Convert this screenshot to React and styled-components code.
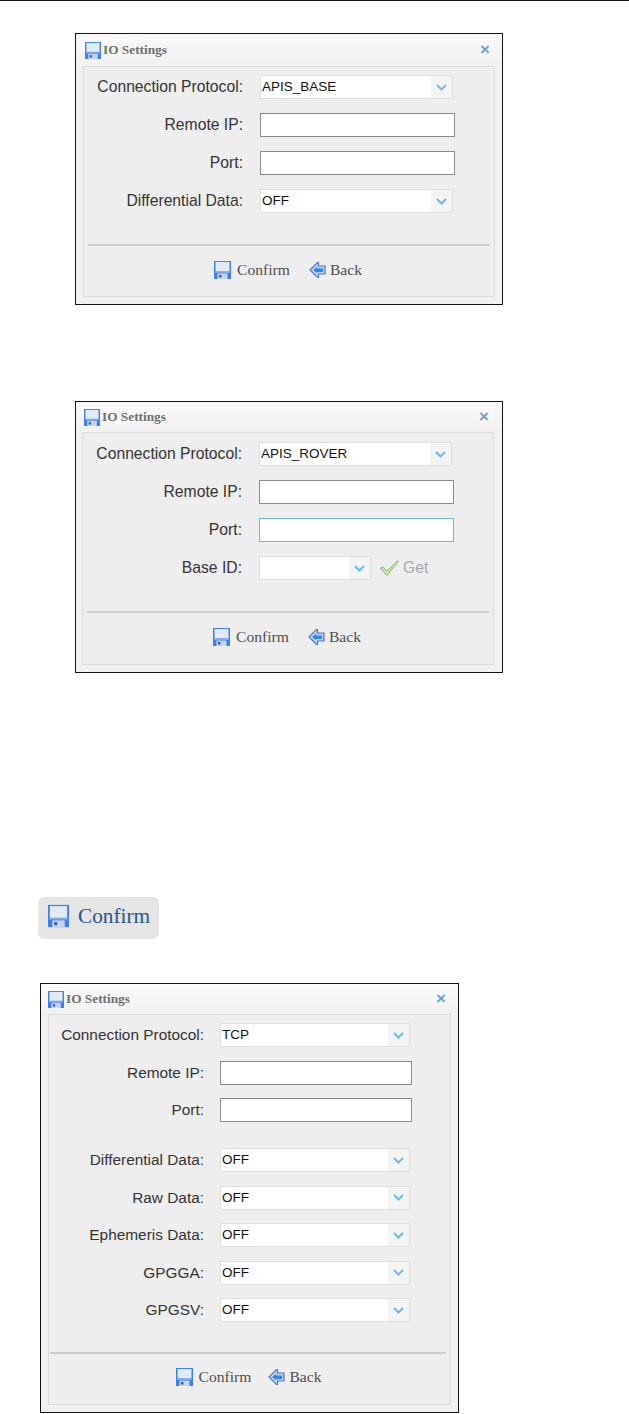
import React from "react";
import styled, { createGlobalStyle } from "styled-components";

const GlobalStyle = createGlobalStyle`
  html, body {
    margin: 0;
    padding: 0;
    background: #fff;
  }
`;

const Page = styled.div`
  width: 629px;
  height: 1414px;
  overflow: hidden;
  border-top: 1px solid #111;
  box-sizing: border-box;
`;

const Dialog = styled.section`
  box-sizing: border-box;
  display: flex;
  flex-direction: column;
  width: ${(p) => p.$width}px;
  height: ${(p) => p.$height}px;
  margin: ${(p) => p.$top}px 0 0 ${(p) => p.$left}px;
  padding: 0 ${(p) => p.$insetRight}px 7px ${(p) => p.$inset}px;
  border: 1px solid #111;
  background: linear-gradient(#fafafa, #f1f1f1 30px);
`;

const Header = styled.header`
  display: flex;
  align-items: center;
  height: ${(p) => p.$height}px;
  padding-left: ${(p) => p.$pad}px;
  flex: none;
`;

const Title = styled.h2`
  flex: 1;
  margin: 0 0 0 2px;
  font: bold 13.3px "Liberation Serif", serif;
  color: #6f6f6f;
`;

const Close = styled.span`
  margin-right: 5px;
  font: bold 17px "Liberation Sans", sans-serif;
  color: #6c9fd2;
`;

const Panel = styled.div`
  box-sizing: border-box;
  flex: 1;
  display: flex;
  flex-direction: column;
  padding-top: 8px;
  border: 1px solid #dcdcdc;
  background: #eeeeee;
`;

const Fields = styled.div`
  display: flex;
  flex-direction: column;
  gap: ${(p) => p.$gap}px;
`;

const Row = styled.div`
  display: flex;
  align-items: center;
  gap: ${(p) => p.$gap || 17}px;
  height: 24px;
  margin-top: ${(p) => p.$space || 0}px;
`;

const Label = styled.label`
  width: ${(p) => p.$width}px;
  text-align: right;
  flex: none;
  font: ${(p) => p.$size || 15.7}px "Liberation Sans", sans-serif;
  color: #333;
  white-space: nowrap;
`;

const SelectBox = styled.div`
  box-sizing: border-box;
  display: flex;
  width: ${(p) => p.$width}px;
  height: 24px;
  border: 1px solid #dfdfdf;
  background: #fff;
`;

const SelectValue = styled.span`
  flex: 1;
  padding-left: 1px;
  font: 13.5px/22px "Liberation Sans", sans-serif;
  color: #111;
`;

const ArrowBox = styled.span`
  display: flex;
  align-items: center;
  justify-content: center;
  width: 21px;
  background: #f4f4f4;
`;

const TextInput = styled.div`
  box-sizing: border-box;
  width: ${(p) => p.$width}px;
  height: 24px;
  background: #fff;
  border: 1px solid ${(p) => (p.$focused ? "#6cb4e4" : "#8a8a8a")};
`;

const GetButton = styled.span`
  display: flex;
  align-items: center;
  gap: 4px;
  margin-left: -9px;
  font: 15.7px "Liberation Sans", sans-serif;
  color: #a9a9a9;
`;

const Divider = styled.hr`
  margin: ${(p) => p.$top}px ${(p) => p.$right}px 0 ${(p) => p.$left}px;
  border: 0;
  border-top: 2px solid #cdcdcd;
  height: 0;
`;

const Footer = styled.footer`
  display: flex;
  justify-content: center;
  gap: ${(p) => p.$gap}px;
  margin-top: ${(p) => p.$top}px;
  padding-right: ${(p) => p.$shift}px;
`;

const Action = styled.span`
  display: flex;
  align-items: center;
  gap: ${(p) => p.$gap}px;
  height: 18px;
  font: 15.6px "Liberation Serif", serif;
  color: #4d4d4d;
`;

const Chip = styled.div`
  box-sizing: border-box;
  display: flex;
  align-items: center;
  gap: 9px;
  width: 121px;
  height: 42px;
  margin: 224px 0 0 38px;
  padding: 0 0 4px 10px;
  border-radius: 6px;
  background: #e5e5e5;
  font: 21.3px "Liberation Serif", serif;
  color: #25558f;
`;

function Floppy({ w = 17, h = 18 }) {
  return (
    <svg width={w} height={h} viewBox="0 0 17 18">
      <rect width="17" height="18" fill="#3f7fe8" />
      <rect x="1.5" y="1" width="14" height="9.5" fill="#e2eaf6" />
      <rect x="1" y="10.5" width="15" height="1.5" fill="#7da8ec" />
      <rect x="3.5" y="12.5" width="10" height="5.5" fill="#c9d6ea" />
      <rect x="5" y="14" width="2.5" height="2.5" fill="#2d5cb0" />
    </svg>
  );
}

function BackArrow() {
  return (
    <svg width="17" height="18" viewBox="0 0 17 18">
      <path
        d="M1 9 L8.5 1.5 L9.5 1.5 L9.5 5 L16 5 L16 13 L9.5 13 L9.5 16.5 L8.5 16.5 Z"
        fill="#bcd4f4"
        stroke="#5a6fc8"
        strokeWidth="1.2"
      />
      <path d="M4 9 L8 6 L8 7.5 L14 7.5 L14 11 L8 11 L8 12 Z" fill="#2f86e4" />
    </svg>
  );
}

function Chevron() {
  return (
    <svg width="11" height="7" viewBox="0 0 11 7">
      <path d="M1 1 L5.5 5.5 L10 1" fill="none" stroke="#6cb6ee" strokeWidth="2" />
    </svg>
  );
}

function Check() {
  return (
    <svg width="20" height="16" viewBox="0 0 20 16">
      <path
        d="M1 8 L4 7 L8 11 L18 1 L19.5 1.5 L8 15.5 Z"
        fill="#c2e6a2"
        stroke="#8fb98a"
        strokeWidth="1"
      />
    </svg>
  );
}

function Select({ value, width }) {
  return (
    <SelectBox $width={width}>
      <SelectValue>{value}</SelectValue>
      <ArrowBox>
        <Chevron />
      </ArrowBox>
    </SelectBox>
  );
}

function Actions({ top = 15, gap = 19, shift = 2 }) {
  return (
    <Footer $top={top} $gap={gap} $shift={shift}>
      <Action $gap={6}>
        <Floppy />
        Confirm
      </Action>
      <Action $gap={4}>
        <BackArrow />
        Back
      </Action>
    </Footer>
  );
}

function DialogHead({ height, pad = 2 }) {
  return (
    <Header $height={height} $pad={pad}>
      <Floppy w={16} h={17} />
      <Title>IO Settings</Title>
      <Close>×</Close>
    </Header>
  );
}

function App() {
  return (
    <>
      <GlobalStyle />
      <Page>
        <Dialog $width={428} $height={272} $top={32} $left={75} $inset={7} $insetRight={7}>
          <DialogHead height={32} />
          <Panel>
            <Fields $gap={14}>
              <Row>
                <Label $width={159}>Connection Protocol:</Label>
                <Select value="APIS_BASE" width={193} />
              </Row>
              <Row>
                <Label $width={159}>Remote IP:</Label>
                <TextInput $width={195} />
              </Row>
              <Row>
                <Label $width={159}>Port:</Label>
                <TextInput $width={195} />
              </Row>
              <Row>
                <Label $width={159}>Differential Data:</Label>
                <Select value="OFF" width={193} />
              </Row>
            </Fields>
            <Divider $top={31} $left={4} $right={4} />
            <Actions />
          </Panel>
        </Dialog>

        <Dialog $width={428} $height={272} $top={96} $left={75} $inset={6} $insetRight={8}>
          <DialogHead height={30} />
          <Panel>
            <Fields $gap={14}>
              <Row $space={1}>
                <Label $width={159}>Connection Protocol:</Label>
                <Select value="APIS_ROVER" width={193} />
              </Row>
              <Row>
                <Label $width={159}>Remote IP:</Label>
                <TextInput $width={195} />
              </Row>
              <Row>
                <Label $width={159}>Port:</Label>
                <TextInput $width={195} $focused />
              </Row>
              <Row>
                <Label $width={159}>Base ID:</Label>
                <Select value="" width={112} />
                <GetButton>
                  <Check />
                  Get
                </GetButton>
              </Row>
            </Fields>
            <Divider $top={31} $left={4} $right={4} />
            <Actions />
          </Panel>
        </Dialog>

        <Chip>
          <Floppy w={21} h={24} />
          Confirm
        </Chip>

        <Dialog $width={419} $height={430} $top={44} $left={40} $inset={7} $insetRight={7}>
          <DialogHead height={30} pad={0} />
          <Panel>
            <Fields $gap={13.5}>
              <Row $gap={16}>
                <Label $width={155} $size={15.4}>Connection Protocol:</Label>
                <Select value="TCP" width={190} />
              </Row>
              <Row $gap={16}>
                <Label $width={155} $size={15.4}>Remote IP:</Label>
                <TextInput $width={192} />
              </Row>
              <Row $gap={16}>
                <Label $width={155} $size={15.4}>Port:</Label>
                <TextInput $width={192} />
              </Row>
            </Fields>
            <Fields $gap={13.5}>
              <Row $gap={16} $space={26}>
                <Label $width={155} $size={15.4}>Differential Data:</Label>
                <Select value="OFF" width={190} />
              </Row>
              <Row $gap={16}>
                <Label $width={155} $size={15.4}>Raw Data:</Label>
                <Select value="OFF" width={190} />
              </Row>
              <Row $gap={16}>
                <Label $width={155} $size={15.4}>Ephemeris Data:</Label>
                <Select value="OFF" width={190} />
              </Row>
              <Row $gap={16}>
                <Label $width={155} $size={15.4}>GPGGA:</Label>
                <Select value="OFF" width={190} />
              </Row>
              <Row $gap={16}>
                <Label $width={155} $size={15.4}>GPGSV:</Label>
                <Select value="OFF" width={190} />
              </Row>
            </Fields>
            <Divider $top={30} $left={1} $right={4} />
            <Actions top={14} gap={17} />
          </Panel>
        </Dialog>
      </Page>
    </>
  );
}

export default App;
